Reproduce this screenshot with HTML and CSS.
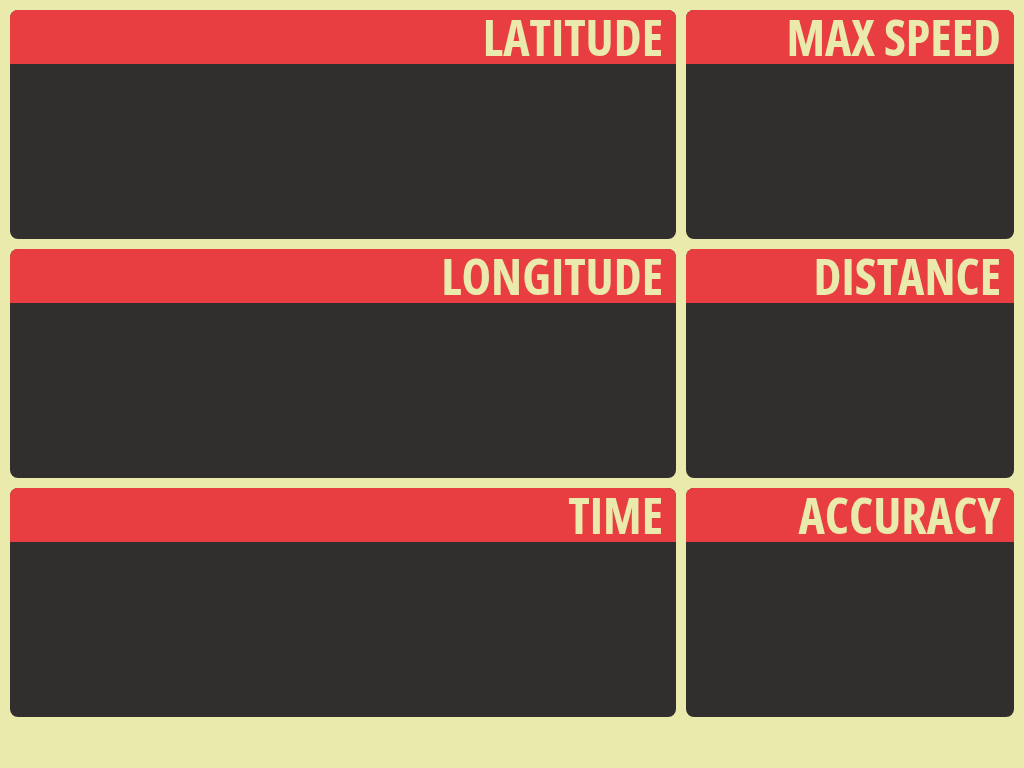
FILE: index.html
```html
<!DOCTYPE html>
<html>
<head>
<meta charset="utf-8">
<link rel="stylesheet" href="styles.css">
</head>
<body>
<div class="grid">
  <div class="card"><div class="head">LATITUDE</div><div class="body"></div></div>
  <div class="card"><div class="head">MAX SPEED</div><div class="body"></div></div>
  <div class="card"><div class="head">LONGITUDE</div><div class="body"></div></div>
  <div class="card"><div class="head">DISTANCE</div><div class="body"></div></div>
  <div class="card"><div class="head">TIME</div><div class="body"></div></div>
  <div class="card"><div class="head">ACCURACY</div><div class="body"></div></div>
</div>
</body>
</html>
```
FILE: styles.css
```css
html, body {
  margin: 0;
  padding: 0;
  background: #ebeaad;
  width: 1024px;
  height: 768px;
}
.grid {
  display: grid;
  grid-template-columns: 666px 328px;
  grid-template-rows: repeat(3, 229px);
  gap: 10px;
  padding: 10px;
}
.card {
  display: flex;
  flex-direction: column;
  border-radius: 8px;
  background: #302f2e;
}
.head {
  height: 54px;
  border-radius: 8px 8px 0 0;
  background: #e83e42;
  color: #ebeaad;
  font-family: "Open Sans", sans-serif;
  font-stretch: 75%;
  font-weight: 700;
  font-size: 50px;
  line-height: 54px;
  text-align: right;
  padding-right: 13px;
  white-space: nowrap;
}
.body {
  flex: 1;
}
```
